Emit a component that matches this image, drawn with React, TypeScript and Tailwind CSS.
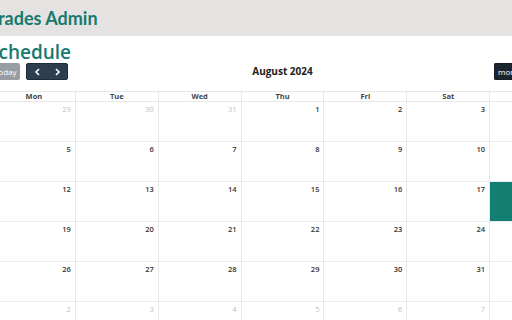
import React from "react";

const weeks: { d: number; other: boolean }[][] = [
  [29, 30, 31, 1, 2, 3, 4].map((d, i) => ({ d, other: i < 3 })),
  [5, 6, 7, 8, 9, 10, 11].map((d) => ({ d, other: false })),
  [12, 13, 14, 15, 16, 17, 18].map((d) => ({ d, other: false })),
  [19, 20, 21, 22, 23, 24, 25].map((d) => ({ d, other: false })),
  [26, 27, 28, 29, 30, 31, 1].map((d, i) => ({ d, other: i === 6 })),
  [2, 3, 4, 5, 6, 7, 8].map((d) => ({ d, other: true })),
];
const days = ["Mon", "Tue", "Wed", "Thu", "Fri", "Sat", "Sun"];

export default function App() {
  return (
    <div className="w-[512px] h-[320px] overflow-hidden bg-white" style={{ fontFamily: '"Open Sans", sans-serif' }}>
      <div className="h-[36px] bg-[#e4e3e1] flex items-center">
        <div className="ml-[-11px] text-[18px] font-bold text-[#17796f] leading-none" style={{ fontFamily: 'Lato, sans-serif' }}>
          Trades Admin
        </div>
      </div>
      <div className="ml-[-8px] w-[581px]">
        <div className="mt-[5px] ml-[-4px] text-[19px] font-semibold text-[#17796f] leading-[22px]">Schedule</div>
        <div className="grid grid-cols-3 items-center h-[17px]">
          <div className="flex gap-[6px] h-[17px]">
            <div className="w-[28px] h-[17px] rounded-[2px] bg-[#6c757d] opacity-70 text-white text-[8px] flex items-center justify-center">today</div>
            <div className="flex h-[17px] rounded-[2px] bg-[#2c3e50] border border-[#1e2b37] text-white">
              <div className="w-[20px] flex items-center justify-center">
                <svg width="7" height="8" viewBox="0 0 7 8"><path d="M5 1 L2 4 L5 7" stroke="white" strokeWidth="1.6" fill="none" /></svg>
              </div>
              <div className="w-[20px] flex items-center justify-center">
                <svg width="7" height="8" viewBox="0 0 7 8"><path d="M2 1 L5 4 L2 7" stroke="white" strokeWidth="1.6" fill="none" /></svg>
              </div>
            </div>
          </div>
          <div className="text-center text-[10px] font-bold text-[#222]">August 2024</div>
          <div className="flex justify-end">
            <div className="flex h-[17px] rounded-[2px] overflow-hidden">
              <div className="w-[29px] pl-[3px] bg-[#1a252f] text-white text-[8px] flex items-center border border-[#151e27]">month</div>
              <div className="w-[28px] justify-center bg-[#2c3e50] text-white text-[8px] flex items-center">week</div>
              <div className="w-[22px] justify-center bg-[#2c3e50] text-white text-[8px] flex items-center">day</div>
            </div>
          </div>
        </div>
        <div className="mt-[11px] border-t border-l border-[#e8e8e8]">
          <div className="grid grid-cols-7 h-[10px] border-b border-[#e8e8e8]">
            {days.map((d) => (
              <div key={d} className="border-r border-[#e8e8e8] text-center text-[7.5px] font-bold text-[#444] leading-[9px]">{d}</div>
            ))}
          </div>
          {weeks.map((w, wi) => (
            <div key={wi} className="grid grid-cols-7 h-[40px] border-b border-[#ececec]">
              {w.map((c, ci) => (
                <div
                  key={ci}
                  className={`border-r border-[#e8e8e8] text-right pr-[4px] pt-[2px] text-[7.5px] leading-[10px] ${c.other ? "text-[#c0c0c0]" : "font-semibold text-[#333]"} ${wi === 2 && ci === 6 ? "bg-[#137f72]" : ""}`}
                >
                  {c.d}
                </div>
              ))}
            </div>
          ))}
        </div>
      </div>
    </div>
  );
}
